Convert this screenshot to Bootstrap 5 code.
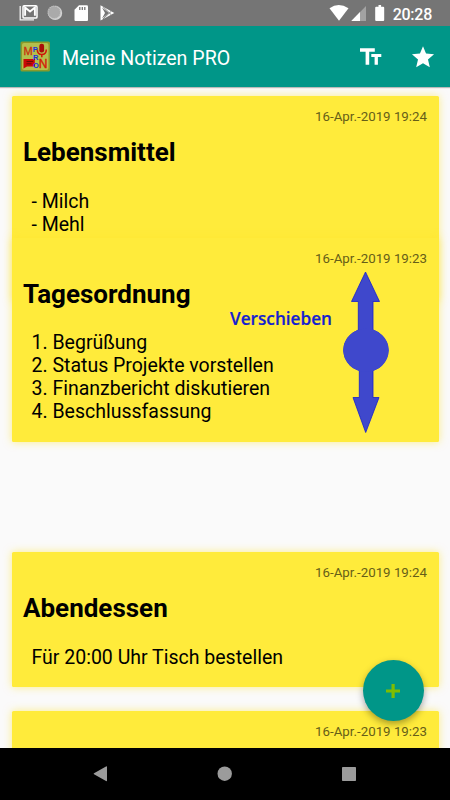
<!DOCTYPE html>
<html lang="de">
<head>
<meta charset="utf-8">
<meta name="viewport" content="width=device-width, initial-scale=1">
<title>Meine Notizen PRO</title>
<link href="https://cdn.jsdelivr.net/npm/bootstrap@5.3.0/dist/css/bootstrap.min.css" rel="stylesheet">
<style>
  body { font-family: Roboto, "Liberation Sans", sans-serif; background: #fafafa; color: #000; }
  svg { display: block; flex: none; }
  .screen { width: 450px; height: 800px; }
  .statusbar { height: 26px; background: #757575; padding: 0 18px 0 19px; }
  .clock { font-size: 16px; font-weight: 500; line-height: 27px; padding-top: 2px; letter-spacing: -.25px; }
  .appbar { height: 61px; background: #009688; padding: 0 14px 0 20px; box-shadow: 0 1px 1px rgba(0,0,0,.25); z-index: 1; }
  .app-title { font-size: 19.6px; line-height: 24px; margin-left: 11px; padding-top: 4px; }
  .notes { padding: 9px 11.5px 0 12px; }
  .note { flex: none; background: #ffeb3b; border-radius: 1.5px; box-shadow: 0 0 9px rgba(255,225,40,.55); padding: 12px 11.5px 0 11px; height: 135px; }
  .note-long { height: 204.5px; }
  .note-dragged { margin-top: -63px; margin-bottom: 110px; }
  .note-date { font-size: 13.3px; line-height: 17px; color: #665e18; }
  .note-title { font-size: 26px; line-height: 30px; font-weight: 700; margin: 12px 0 0; }
  .note-text { font-size: 19.5px; line-height: 23px; margin: 23px 0 0 8.5px; white-space: pre-line; }
  .note-dragged .note-text { margin-top: 22px; }
  .drag-hint { left: 217px; top: 33.5px; }
  .add-btn { width: 61px; height: 61px; right: 26.5px; bottom: 27px; background: #009688; box-shadow: 0 3px 7px rgba(0,0,0,.34); }
  .softkeys { height: 52px; background: #000; z-index: 2; }
</style>
</head>
<body>
<div class="screen d-flex flex-column overflow-hidden position-relative">
  <div class="statusbar d-flex align-items-center justify-content-between text-white">
    <svg width="100" height="26" viewBox="0 0 100 26">
      <path d="M1.200 6v13.800H15" fill="none" stroke="#f1f1f1" stroke-width="1.300"/>
      <rect x="4" y="5.700" width="14" height="12.400" rx="1.200" fill="none" stroke="#fff" stroke-width="1.500"/>
      <path d="M6.100 15.800V7.500l4.900 4 4.900-4v8.300" fill="none" stroke="#fff" stroke-width="1.900"/>
      <circle cx="36.200" cy="13" r="7" fill="#d5d5d5"/>
      <circle cx="35.300" cy="12.300" r="6.300" fill="#aaa" stroke="#c8c8c8" stroke-width="1.200" stroke-dasharray="1 1"/>
      <path d="M60 5.200h7.700q1.300 0 1.300 1.300V20q0 1-1 1H56.500q-1 0-1-1V9.700z" fill="#fff"/>
      <path d="M60.800 7v3M63.300 7v3M65.800 7v3" stroke="#757575" stroke-width="1.300"/>
      <path d="M81.500 5.200 95.300 13 81.500 20.400z" fill="#fff"/>
      <path d="M83 7.500 90 13 83 18.500 86 13z" fill="#757575"/>
      <path d="M84 6.700 92.500 15M84 19l8.500-8" stroke="#858585" stroke-width="1"/>
    </svg>
    <div class="d-flex align-items-center">
      <svg width="64" height="26" viewBox="0 0 64 26">
        <path d="M.5 8.200Q9.500 1.800 19.500 8.200L10 20.800z" fill="#fff"/>
        <path d="M37 6v15H22.300z" fill="#a2a2a2"/>
        <path d="M31 12v9h-8.700z" fill="#fff"/>
        <path d="M49.500 5h2.600v1.700h2.100q1 0 1 1V20q0 1-1 1h-7q-1 0-1-1V7.700q0-1 1-1h2.300z" fill="#fff"/>
      </svg>
      <span class="clock">20:28</span>
    </div>
  </div>

  <header class="appbar d-flex align-items-center text-white flex-shrink-0">
    <svg width="31" height="32" viewBox="0 0 31 32">
      <rect x=".5" y=".5" width="29.500" height="30" rx="1.500" fill="#8a9a2a"/>
      <rect x="2" y="2" width="26.500" height="27" rx="2" fill="#b4bf4c"/>
      <text x="3.500" y="13.500" font-size="11" font-family="Liberation Sans, sans-serif" fill="#c8330c" stroke="#c8330c" stroke-width=".3">M</text>
      <text x="18.800" y="27" font-size="12" font-family="Liberation Sans, sans-serif" fill="#d51808" stroke="#d51808" stroke-width=".4">N</text>
      <path d="M3.500 18h11.300v7.500H7L3.500 27.500z" fill="#c90a05"/>
      <path d="M6.500 20.500h6.500M6.500 22.800h5" stroke="#671005" stroke-width="1"/>
      <rect x="19.300" y="2.800" width="4.800" height="8.700" rx="2.200" fill="#a90d08"/>
      <path d="M17.300 8.500q0 5 4.500 5t4.500-5M21.800 13.500v2.800" fill="none" stroke="#d01508" stroke-width="1.500"/>
      <g font-size="7.500" font-weight="700" font-family="Liberation Sans, sans-serif" fill="#1830e0">
        <text x="12.800" y="10.500">P</text><text x="13" y="18.500">R</text><text x="13" y="26.500">O</text>
      </g>
    </svg>
    <span class="app-title flex-grow-1">Meine Notizen PRO</span>
    <svg width="22" height="20" viewBox="0 0 22 20">
      <path d="M0 1.200h14.800v3.500H9.200V17.700H5.600V4.700H0zM11.300 7h10v3.100h-3.400v7.600h-3.300v-7.600h-3.300z" fill="#fff"/>
    </svg>
    <svg class="ms-4 ps-1" width="30" height="26" viewBox="0 0 24 24">
      <path d="M12 17.700 18.300 21.500 16.600 14.300 22.200 9.500 14.800 8.800 12 2 9.200 8.800 1.800 9.500 7.400 14.300 5.700 21.500z" fill="#fff"/>
    </svg>
  </header>

  <main class="notes d-flex flex-column flex-grow-1 overflow-hidden">
    <article class="note note-long">
      <div class="note-date text-end">16-Apr.-2019 19:24</div>
      <h2 class="note-title">Lebensmittel</h2>
      <p class="note-text">- Milch
- Mehl</p>
    </article>
    <article class="note note-long note-dragged position-relative">
      <div class="note-date text-end">16-Apr.-2019 19:23</div>
      <h2 class="note-title">Tagesordnung</h2>
      <p class="note-text">1. Begrüßung
2. Status Projekte vorstellen
3. Finanzbericht diskutieren
4. Beschlussfassung</p>
      <svg class="drag-hint position-absolute" width="162" height="164" viewBox="0 0 162 164">
        <text x="1" y="54" textLength="102" lengthAdjust="spacingAndGlyphs" font-family="Open Sans, Noto Sans, sans-serif" font-size="17.500" font-weight="600" fill="#1520d0" stroke="#1520d0" stroke-width=".2">Verschieben</text>
        <path d="M136.500 1 150.500 30.500H144V59A22.700 21.500 0 0 1 144 99.500V126.500H150L136.700 161.500 124 126.500H130.300V99.500A22.700 21.500 0 0 1 129.300 59V30.500H122.500z" fill="#3f48cc" stroke="#1720cf" stroke-width=".8"/>
        <ellipse cx="137" cy="79.300" rx="22.800" ry="21.700" fill="#3f48cc"/>
      </svg>
    </article>
    <article class="note">
      <div class="note-date text-end">16-Apr.-2019 19:24</div>
      <h2 class="note-title">Abendessen</h2>
      <p class="note-text">Für 20:00 Uhr Tisch bestellen</p>
    </article>
    <article class="note mt-4">
      <div class="note-date text-end">16-Apr.-2019 19:23</div>
    </article>
  </main>

  <div class="position-relative">
    <button class="add-btn btn position-absolute rounded-circle border-0 p-0 d-flex align-items-center justify-content-center" type="button" aria-label="Neue Notiz">
      <svg width="16" height="16" viewBox="0 0 16 16"><path d="M6.500 1h3.200v5.500H15v2.900H9.700V15H6.500V9.400H1V6.500h5.500z" fill="#7fbd00"/></svg>
    </button>
  </div>
  <nav class="softkeys flex-shrink-0">
    <svg width="450" height="52" viewBox="0 0 450 52" fill="#9b9b9b">
      <path d="M94 25.200 106 18.500q1-.5 1 .5V32.500q0 1-1 .5L94 26.300q-.8-.500 0-1.100z"/>
      <circle cx="224.700" cy="25.700" r="7.200"/>
      <rect x="342" y="19" width="14" height="14" rx=".7"/>
    </svg>
  </nav>
</div>
<script src="https://cdn.jsdelivr.net/npm/bootstrap@5.3.0/dist/js/bootstrap.bundle.min.js"></script>
</body>
</html>
